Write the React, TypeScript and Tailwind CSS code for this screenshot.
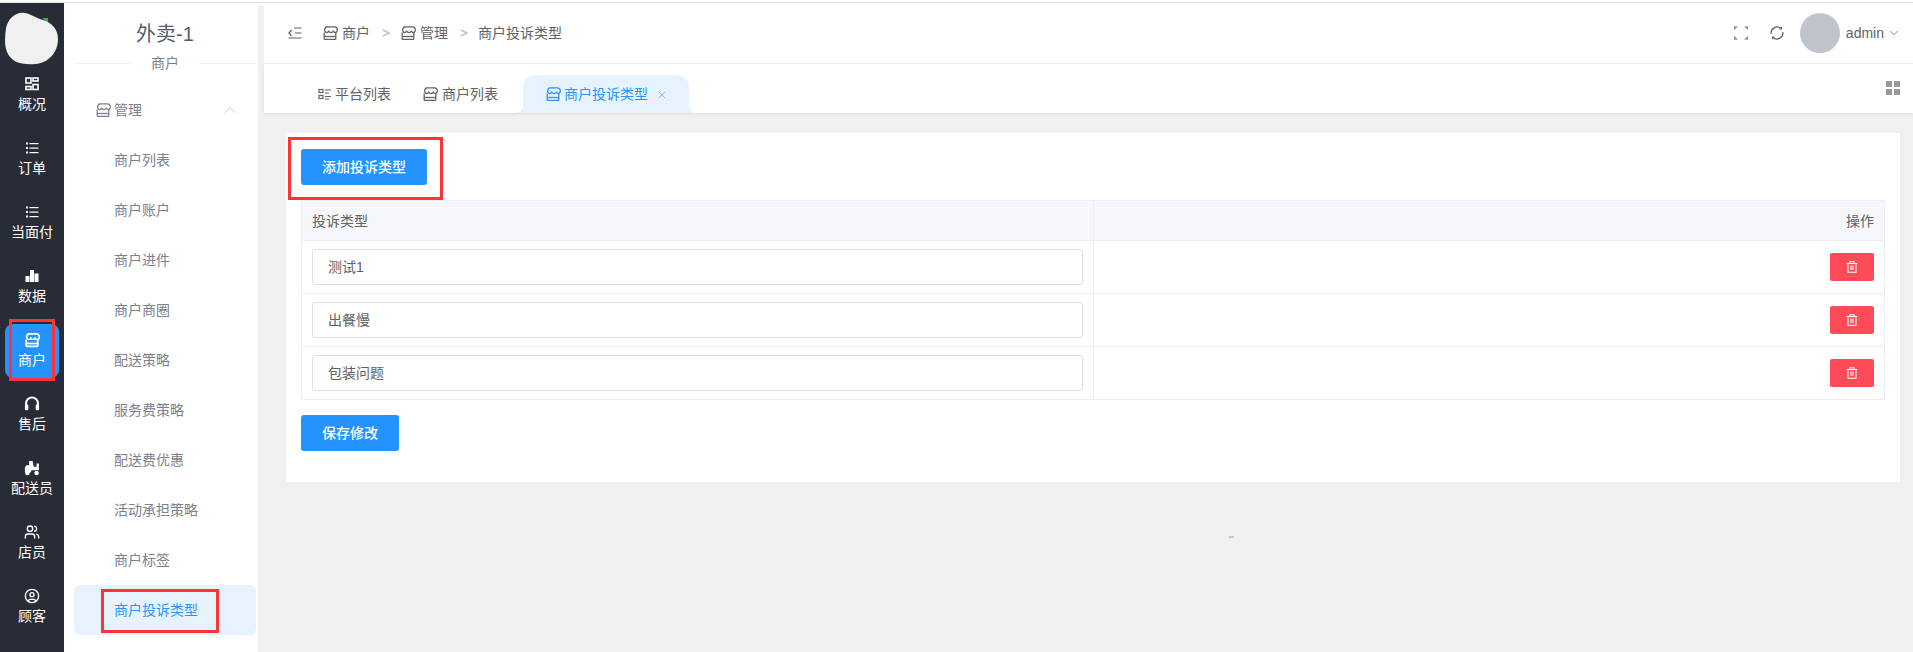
import { ChevronDown, ChevronUp, CircleUser, Users, X } from 'lucide-react';

const StoreIcon = ({ className = '' }: { className?: string }) => (
  <svg className={className} fill="none" stroke="currentColor" strokeWidth="1.3" viewBox="0 0 16 16">
    <path d="M3.5 1.800h9c1.400 0 2.600 1.200 2.800 2.700.2 1.600-.7 3-2 3-.9 0-1.600-.6-2.100-1.300-.4.8-1.200 1.300-2.200 1.300s-1.800-.5-2.200-1.300c-.5.7-1.200 1.300-2.100 1.300-1.300 0-2.200-1.400-2-3 .2-1.500 1.400-2.700 2.800-2.700z" />
    <path d="M2.200 7.500v6.200c0 .4.3.6.6.6h10.400c.3 0 .6-.2.6-.6V7.500" />
    <path d="M2.400 11.500h11.200" />
  </svg>
);

const ListIcon = ({ className = '' }: { className?: string }) => (
  <svg className={className} fill="currentColor" viewBox="0 0 14 14">
    <rect height="2" width="2" x="1" y="1.500" />
    <rect height="2" width="2" x="1" y="6" />
    <rect height="2" width="2" x="1" y="10.500" />
    <rect height="1.200" width="9" x="4.500" y="2" />
    <rect height="1.200" width="9" x="4.500" y="6.500" />
    <rect height="1.200" width="9" x="4.500" y="11" />
  </svg>
);

// tab icon: two blocks on the left, short dashes on the right
const PlatformIcon = ({ className = '' }: { className?: string }) => (
  <svg className={className} fill="none" stroke="currentColor" strokeWidth="1.200" viewBox="0 0 14 14">
    <rect height="3" width="4" x="1" y="2.500" />
    <rect height="3" width="4" x="1" y="8.500" />
    <path d="M7 3h6M7 6h4M7 9.500h6M7 12h4" />
  </svg>
);

const GridIcon = () => (
  <svg className="h-3.5 w-3.5" fill="none" stroke="currentColor" strokeWidth="1.600" viewBox="0 0 14 14">
    <rect height="5" width="5" x="1" y="1" />
    <rect height="3" width="5" x="8" y="1" />
    <rect height="3" width="5" x="1" y="9.500" />
    <rect height="5" width="5" x="8" y="7.500" />
  </svg>
);

const BarsIcon = () => (
  <svg className="h-3.5 w-3.5" fill="currentColor" viewBox="0 0 14 14">
    <rect height="6" width="4" x="0.500" y="7" />
    <rect height="12" width="4" x="5" y="1" />
    <rect height="8.500" width="4" x="9.500" y="4.500" />
  </svg>
);

const HeadsetIcon = () => (
  <svg className="h-4 w-4" fill="none" viewBox="0 0 14 14">
    <path d="M1.800 8V6.500a5.200 5.200 0 0 1 10.400 0V8" stroke="currentColor" strokeWidth="1.800" />
    <rect fill="currentColor" height="5" rx="1" width="3" x="0.800" y="7.500" />
    <rect fill="currentColor" height="5" rx="1" width="3" x="10.200" y="7.500" />
  </svg>
);

const RiderIcon = () => (
  <svg className="h-4 w-4" fill="currentColor" viewBox="0 0 14 14">
    <path d="M4.500 .8h3l1 5.200h2.500V3h2v6H6.500L5.800 11H.8V6.500L2 4.500h2.500z" />
    <circle cx="3" cy="11.300" r="2" />
    <circle cx="11" cy="11.300" r="2" />
  </svg>
);

const FullscreenIcon = () => (
  <svg className="h-3.5 w-3.5" fill="none" stroke="currentColor" strokeWidth="1.200" viewBox="0 0 14 14">
    <path d="M.8 3.500V1h2.500M10.700 1h2.500v2.500M13.200 10.500V13h-2.500M3.300 13H.8v-2.500" />
  </svg>
);

const RefreshIcon = () => (
  <svg className="h-3.5 w-3.5" fill="none" stroke="currentColor" strokeWidth="1.200" viewBox="0 0 14 14">
    <path d="M1.200 8A6 6 0 0 1 11 2.500" />
    <path d="M12.800 6A6 6 0 0 1 3 11.500" />
    <path d="M11.500 .8V3H9.300M2.500 13.200V11h2.200" />
  </svg>
);

const CollapseIcon = () => (
  <svg className="h-3.5 w-3.5" fill="none" stroke="currentColor" strokeWidth="1.200" viewBox="0 0 14 14">
    <path d="M6 2h7.500M7 7h6.500M.5 12h13M3.500 4 1 7l2.500 3" />
  </svg>
);

const CrumbArrow = () => (
  <svg className="ml-3 mr-2.5 h-2 w-2 text-[#c0c4cc]" fill="none" stroke="currentColor" strokeWidth="1.600" viewBox="0 0 8 8">
    <path d="M.8 1 7 4 .8 7" />
  </svg>
);

const TrashIcon = () => (
  <svg className="h-3 w-3" fill="none" stroke="currentColor" strokeWidth="1.100" viewBox="0 0 12 12">
    <path d="M.8 2.500h10.400M4 2.500V.8h4v1.700M2 2.500v8.800h8V2.500" />
    <path d="M5 4.500v4.500M7 4.500v4.500" />
  </svg>
);

const sideItems = [
  { label: '概况', icon: <GridIcon /> },
  { label: '订单', icon: <ListIcon className="h-3.5 w-3.5" /> },
  { label: '当面付', icon: <ListIcon className="h-3.5 w-3.5" /> },
  { label: '数据', icon: <BarsIcon /> },
  { label: '商户', icon: <StoreIcon className="h-4 w-4 stroke-[1.7]" />, active: true },
  { label: '售后', icon: <HeadsetIcon /> },
  { label: '配送员', icon: <RiderIcon /> },
  { label: '店员', icon: <Users className="h-4 w-4" strokeWidth={2} /> },
  { label: '顾客', icon: <CircleUser className="h-4 w-4" strokeWidth={2} /> },
];

const subItems = ['商户列表', '商户账户', '商户进件', '商户商圈', '配送策略', '服务费策略', '配送费优惠', '活动承担策略', '商户标签', '商户投诉类型'];

const complaintTypes = ['测试1', '出餐慢', '包装问题'];

const App = () => {
  return (
    <div className="h-[652px] overflow-hidden bg-white text-sm [font-family:'Liberation_Sans','Noto_Sans_CJK_SC',sans-serif]">
      <div className="mt-[2px] h-px bg-[#e2e2e2]" />
      <div className="flex h-[649px]">
        {/* icon rail */}
        <aside className="flex w-16 shrink-0 flex-col items-center bg-[#282c36] text-white">
          <div className="flex h-[65px] items-start pt-[9px]">
            <svg className="h-[53px] w-[54px]" viewBox="0 0 54 53">
              <path d="M37 6 43 6 43 11z" fill="#3fae4a" />
              <path d="M1 16C3 6 12-1 20 1c6 1 11 5 18 7 9 3 15 9 15 19 0 13-9 24-23 25C16 53 6 50 2 40-1 32 0 24 1 16z" fill="#f0f0f0" />
            </svg>
          </div>
          <div className="flex flex-col gap-2.5">
            {sideItems.map((item) => (
              <div
                className={`relative flex h-[54px] w-[54px] flex-col items-center justify-center gap-[2px] rounded-lg ${item.active ? 'bg-[#2493ff]' : ''}`}
                key={item.label}
              >
                <div className="flex h-4 items-center justify-center">{item.icon}</div>
                <span className="leading-5">{item.label}</span>
                {item.active && <div className="absolute -top-[5px] left-1 h-[62px] w-[46px] border-[3px] border-[#ff3333]" />}
              </div>
            ))}
          </div>
        </aside>

        {/* submenu */}
        <nav className="w-[194px] shrink-0 pl-2.5 pr-[2px] text-[#7b818d]">
          <div className="flex h-[60px] flex-col items-center">
            <div className="mt-[17px] text-xl leading-7 text-[#565b67]">外卖-1</div>
          </div>
          <div className="relative h-px bg-[#f0f0f0]">
            <span className="absolute -top-[10px] left-[57px] w-[68px] bg-white text-center leading-5">商户</span>
          </div>
          <div className="mt-[21px] flex h-[50px] items-center pl-[21px] pr-4">
            <StoreIcon className="mr-[3px] h-4 w-4" />
            <span className="flex-1">管理</span>
            <ChevronUp className="h-5 w-5 text-[#b9bcc3]" strokeWidth={1} />
          </div>
          {subItems.map((label) => {
            const active = label === '商户投诉类型';
            return (
              <div
                className={`relative flex h-[50px] items-center rounded-md pl-10 ${active ? 'bg-[#e6f3ff] text-[#2a93ff]' : ''}`}
                key={label}
              >
                {label}
                {active && <div className="absolute left-[27px] top-1 h-11 w-[118px] border-[3px] border-[#ff3333]" />}
              </div>
            );
          })}
        </nav>

        <div className="mt-[2px] w-[6px] shrink-0 rounded-t bg-[#f0f0f0]" />

        <main className="relative flex min-w-0 flex-1 flex-col bg-[#f0f0f0]">
          {/* top bar */}
          <header className="flex h-[61px] shrink-0 items-center border-b border-[#f0f0f0] bg-white pl-6 pr-3 text-[#606266]">
            <CollapseIcon />
            <StoreIcon className="ml-5 mr-1 h-4 w-4" />
            <span>商户</span>
            <CrumbArrow />
            <StoreIcon className="mr-1 h-4 w-4" />
            <span>管理</span>
            <CrumbArrow />
            <span>商户投诉类型</span>
            <div className="ml-auto flex items-center">
              <FullscreenIcon />
              <div className="ml-[22px]">
                <RefreshIcon />
              </div>
              <div className="ml-4 h-10 w-10 rounded-full bg-[#c0c4cc]" />
              <span className="ml-1.5">admin</span>
              <ChevronDown className="ml-[3px] h-3.5 w-3.5" strokeWidth={1.3} />
            </div>
          </header>

          {/* tabs */}
          <div className="relative flex h-[49px] shrink-0 items-end bg-white pl-[54px] pr-[13px] text-[#606266] shadow-[0_1px_3px_rgba(0,0,0,0.08)]">
            <div className="flex h-[38px] items-center">
              <PlatformIcon className="mr-[3px] h-3.5 w-3.5" />
              平台列表
            </div>
            <div className="ml-[31px] flex h-[38px] items-center">
              <StoreIcon className="mr-1 h-4 w-4" />
              商户列表
            </div>
            <div className="relative ml-[25px] flex h-[38px] w-[166px] items-center rounded-t-xl bg-[#e6f3ff] pl-[22px] text-[#2a93ff]">
              <div className="absolute -left-2 bottom-0 h-2 w-2 bg-[#e6f3ff]">
                <div className="h-full w-full rounded-br-lg bg-white" />
              </div>
              <div className="absolute -right-2 bottom-0 h-2 w-2 bg-[#e6f3ff]">
                <div className="h-full w-full rounded-bl-lg bg-white" />
              </div>
              <StoreIcon className="mr-[3px] h-4 w-4" />
              商户投诉类型
              <X className="ml-2 mt-px h-3 w-3 text-[#5aabff]" strokeWidth={1.5} />
            </div>
            <div className="mb-[18px] ml-auto grid grid-cols-2 gap-0.5">
              <div className="h-1.5 w-1.5 bg-[#999999]" />
              <div className="h-1.5 w-1.5 bg-[#999999]" />
              <div className="h-1.5 w-1.5 bg-[#999999]" />
              <div className="h-1.5 w-1.5 bg-[#999999]" />
            </div>
          </div>

          {/* content */}
          <div className="pl-[22px] pt-5">
            <section className="relative h-[349px] w-[1614px] bg-white px-[15px] pt-4">
              <div className="absolute left-[2px] top-1 h-[63px] w-[155px] border-[3px] border-[#ff3333]" />
              <button className="h-9 w-[126px] rounded-[3px] bg-[#2493ff] font-medium text-white" type="button">
                添加投诉类型
              </button>
              <div className="mt-[15px] w-[1584px] border border-[#ebeef5] text-[#606266]">
                <div className="flex h-[39px] items-center bg-[#f5f7fa]">
                  <div className="flex h-full w-[792px] items-center border-r border-[#ebeef5] pl-2.5">投诉类型</div>
                  <div className="flex-1 pr-[10px] text-right">操作</div>
                </div>
                {complaintTypes.map((name) => (
                  <div className="flex h-[53px] items-center border-t border-[#ebeef5]" key={name}>
                    <div className="flex h-full w-[792px] items-center border-r border-[#ebeef5] pl-2.5 pr-2.5">
                      <div className="flex h-9 w-full items-center rounded-[3px] border border-[#dcdfe6] pl-[15px]">{name}</div>
                    </div>
                    <div className="flex flex-1 justify-end pr-2.5">
                      <button className="flex h-7 w-11 items-center justify-center rounded-[2px] bg-[#ff4b57] text-white" type="button">
                        <TrashIcon />
                      </button>
                    </div>
                  </div>
                ))}
              </div>
              <button className="mt-[15px] h-9 w-[98px] rounded-[3px] bg-[#2493ff] font-medium text-white" type="button">
                保存修改
              </button>
            </section>
          </div>

          {/* stray speck in the grey area */}
          <div className="absolute left-[965px] top-[533px] h-[2px] w-[5px] bg-[#c6c6c6]" />
        </main>
      </div>
    </div>
  );
};

export default App;
